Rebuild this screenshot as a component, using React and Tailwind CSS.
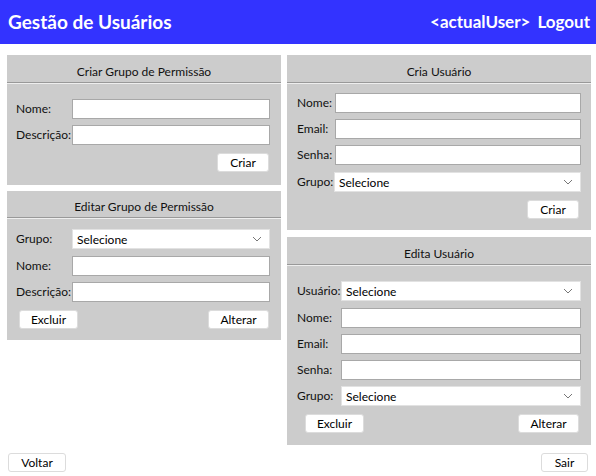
import React from "react";

const font = { fontFamily: 'Lato, "Liberation Sans", sans-serif' };

function Chevron() {
  return (
    <svg width="10" height="6" viewBox="0 0 10 6" className="absolute right-[7px] top-1/2 -translate-y-1/2">
      <path d="M1 1 L5 5 L9 1" fill="none" stroke="#777" strokeWidth="1" />
    </svg>
  );
}

function Field({ label, labelW, select, className = "" }) {
  return (
    <div className={"flex items-center " + className}>
      <span className="shrink-0 whitespace-nowrap text-[12px] text-[#111]" style={{ width: labelW }}>
        {label}
      </span>
      {select ? (
        <div className="relative h-[20px] min-w-0 flex-1 bg-white text-[12px] leading-[20px] pl-[4px] text-black border border-[#e2e2e2]">
          Selecione
          <Chevron />
        </div>
      ) : (
        <input className="h-[20px] w-full min-w-0 flex-1 bg-white border border-[#a8a8a8] outline-none" />
      )}
    </div>
  );
}

function Btn({ children, className = "" }) {
  return (
    <button className={"h-[19px] bg-white rounded-[3px] border border-[#dcdcdc] text-[12px] leading-none text-black " + className}>
      {children}
    </button>
  );
}

function PanelHead({ title, h }) {
  return (
    <div className={"flex items-end justify-center pb-[1px] border-b border-[#999] text-[12px] text-[#111] " + h}>
      {title}
    </div>
  );
}

export default function App() {
  return (
    <div className="w-[596px] h-[476px] bg-white relative" style={font}>
      {/* topo */}
      <div className="h-[44px] bg-[#3333ff] flex items-center justify-between pl-[8px] pr-[6px] text-white font-bold">
        <span className="text-[19px]">Gestão de Usuários</span>
        <span className="text-[17px]">
          &lt;actualUser&gt;
          <span className="ml-[7px]">Logout</span>
        </span>
      </div>

      <div className="flex gap-[6px] pl-[7px] pt-[11px]">
        {/* coluna esquerda */}
        <div className="w-[274px] flex flex-col gap-[6px]">
          <div className="bg-[#cccccc] h-[130px]">
            <PanelHead title="Criar Grupo de Permissão" h="h-[28px]" />
            <div className="border-t border-[#eeeeee] pl-[9px] pr-[11px] pt-[15px] flex flex-col">
              <Field label="Nome:" labelW={56} />
              <Field label="Descrição:" labelW={56} className="mt-[6px]" />
              <div className="flex justify-end mt-[8px]">
                <Btn className="w-[52px] mr-[1px]">Criar</Btn>
              </div>
            </div>
          </div>

          <div className="bg-[#cccccc] h-[149px]">
            <PanelHead title="Editar Grupo de Permissão" h="h-[27px]" />
            <div className="border-t border-[#eeeeee] pl-[9px] pr-[11px] pt-[10px] flex flex-col">
              <Field label="Grupo:" labelW={56} select />
              <Field label="Nome:" labelW={56} className="mt-[7px]" />
              <Field label="Descrição:" labelW={56} className="mt-[6px]" />
              <div className="flex justify-between mt-[8px] pl-[3px]">
                <Btn className="w-[59px]">Excluir</Btn>
                <Btn className="w-[61px] mr-[1px]">Alterar</Btn>
              </div>
            </div>
          </div>
        </div>

        {/* coluna direita */}
        <div className="w-[304px] flex flex-col gap-[7px]">
          <div className="bg-[#cccccc] h-[175px]">
            <PanelHead title="Cria Usuário" h="h-[28px]" />
            <div className="border-t border-[#eeeeee] pl-[10px] pr-[10px] pt-[9px] flex flex-col">
              <Field label="Nome:" labelW={38} />
              <Field label="Email:" labelW={38} className="mt-[6px]" />
              <Field label="Senha:" labelW={38} className="mt-[6px]" />
              <Field label="Grupo:" labelW={37} select className="mt-[7px]" />
              <div className="flex justify-end mt-[8px]">
                <Btn className="w-[52px] mr-[2px]">Criar</Btn>
              </div>
            </div>
          </div>

          <div className="bg-[#cccccc] h-[208px]">
            <PanelHead title="Edita Usuário" h="h-[28px]" />
            <div className="border-t border-[#eeeeee] pl-[10px] pr-[10px] pt-[15px] flex flex-col">
              <Field label="Usuário:" labelW={44} select />
              <Field label="Nome:" labelW={44} className="mt-[7px]" />
              <Field label="Email:" labelW={44} className="mt-[6px]" />
              <Field label="Senha:" labelW={44} className="mt-[6px]" />
              <Field label="Grupo:" labelW={44} select className="mt-[6px]" />
              <div className="flex justify-between mt-[8px] pl-[8px]">
                <Btn className="w-[59px]">Excluir</Btn>
                <Btn className="w-[61px] mr-[2px]">Alterar</Btn>
              </div>
            </div>
          </div>
        </div>
      </div>

      {/* rodapé */}
      <div className="flex justify-between px-[8px] mt-[8px]">
        <Btn className="w-[58px] border-[#aaa]">Voltar</Btn>
        <Btn className="w-[47px] border-[#aaa]">Sair</Btn>
      </div>
    </div>
  );
}
